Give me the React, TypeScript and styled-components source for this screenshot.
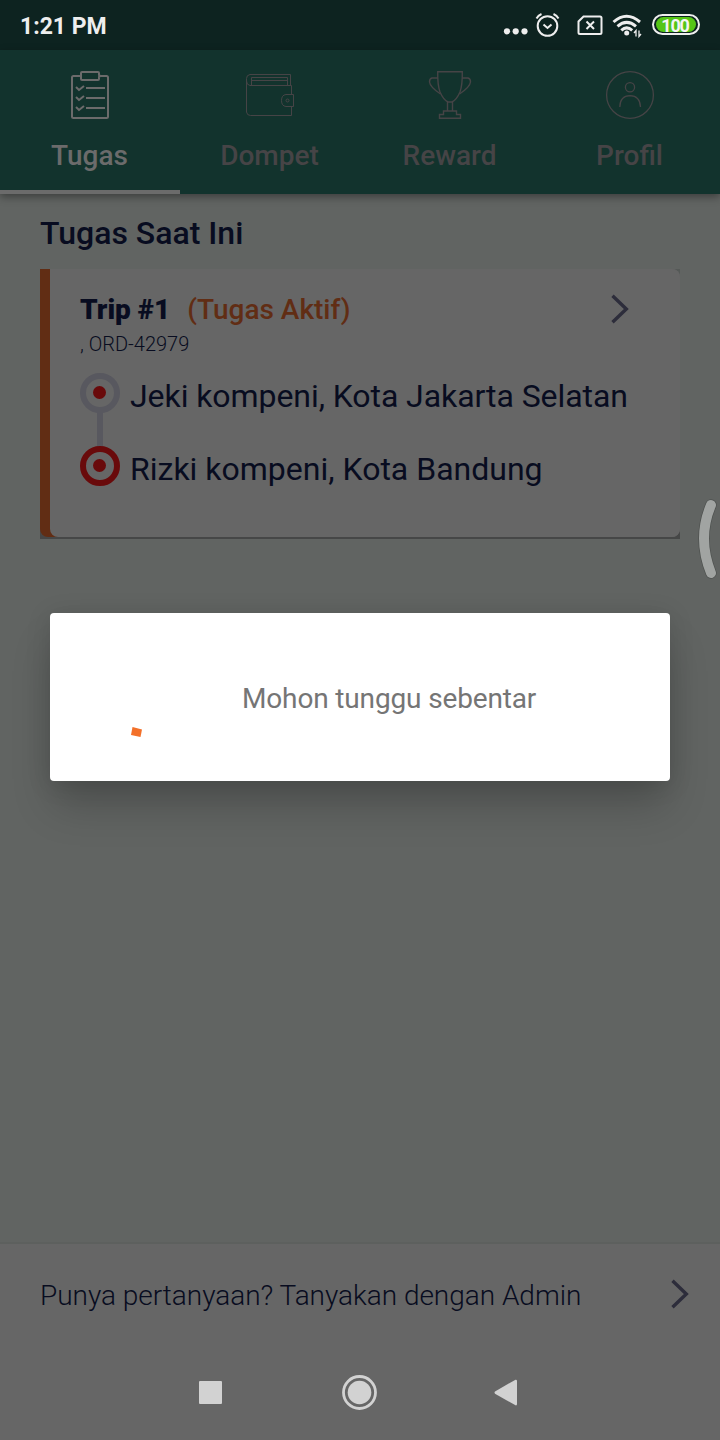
import React from "react";
import styled, { createGlobalStyle } from "styled-components";

const GlobalStyle = createGlobalStyle`
  body { margin: 0; background: #616462; }
  * { box-sizing: border-box; }
`;

const color = {
  status: "#0d2320",
  bar: "#12332d",
  page: "#616462",
  surface: "#666666",
  navy: "#080c20",
  orange: "#612d14",
  red: "#690a0b",
  muted: "#58585f",
  icon: "#eeeeee",
  nav: "#d2d2d2",
};

const Screen = styled.div`
  position: relative;
  display: flex;
  flex-direction: column;
  width: 720px;
  height: 1440px;
  overflow: hidden;
  background: ${color.page};
  font-family: Roboto, "Liberation Sans", sans-serif;
`;

const StatusBar = styled.header`
  display: flex;
  align-items: center;
  justify-content: space-between;
  height: 50px;
  padding: 0 20px 0 20px;
  background: ${color.status};
`;

const Clock = styled.span`
  color: ${color.icon};
  font-size: 23px;
  font-weight: 700;
  line-height: 28px;
  padding-top: 3px;
`;

const StatusIcons = styled.div`
  display: flex;
  align-items: center;
`;

const Battery = styled.div`
  display: flex;
  align-items: center;
  justify-content: center;
  width: 48px;
  height: 21px;
  margin: -1px 0 0 10px;
  border: 2px solid ${color.icon};
  border-radius: 11px;
  padding: 1px 2px;
`;

const BatteryLevel = styled.span`
  width: 100%;
  height: 15px;
  padding-right: 2px;
  border-radius: 8px;
  background: #55c516;
  color: #f4f4f4;
  font-size: 18px;
  font-weight: 700;
  letter-spacing: -1.2px;
  line-height: 17px;
  text-align: center;
`;

const Tabs = styled.nav`
  position: relative;
  display: grid;
  grid-template-columns: repeat(4, 1fr);
  height: 144px;
  background: ${color.bar};
  box-shadow: 0 3px 8px rgba(0, 0, 0, 0.38);
`;

const Tab = styled.div<{ $active?: boolean }>`
  display: flex;
  flex-direction: column;
  align-items: center;
  padding-top: 20px;
  color: ${(p) => (p.$active ? "#6b6b6b" : "#464446")};
  border-bottom: 4px solid ${(p) => (p.$active ? "#6b6b6b" : "transparent")};
`;

const TabLabel = styled.span`
  margin-top: 19px;
  padding-right: 1px;
  font-size: 28px;
  font-weight: 500;
  line-height: 34px;
`;

const Content = styled.main`
  flex: 1;
  padding: 20px 40px 0;
`;

const Title = styled.h1`
  margin: 0 0 17px;
  color: ${color.navy};
  font-size: 32px;
  font-weight: 500;
  line-height: 38px;
`;

const CardShadow = styled.section`
  padding-bottom: 2px;
  background: linear-gradient(#555957 0 50%, #464747 50%);
`;

const CardFrame = styled.div`
  height: 268px;
  padding-left: 10px;
  border-radius: 0 8px 8px 8px;
  background: linear-gradient(to right, ${color.orange} 20px, ${color.surface} 20px);
`;

const Card = styled.div`
  display: flex;
  justify-content: space-between;
  height: 100%;
  padding: 24px 48px 0 30px;
  border-radius: 0 8px 8px 8px;
  background: ${color.surface};
`;

const TripHeading = styled.div`
  display: flex;
  gap: 17px;
  font-size: 28px;
  line-height: 34px;
`;

const TripName = styled.span`
  color: ${color.navy};
  font-weight: 900;
`;

const TripState = styled.span`
  color: ${color.orange};
  font-weight: 500;
`;

const OrderNumber = styled.div`
  margin-top: 5px;
  color: ${color.navy};
  font-size: 20px;
  font-weight: 300;
  line-height: 24px;
`;

const Route = styled.div`
  display: flex;
  flex-direction: column;
  margin-top: 17px;
`;

const Stop = styled.div`
  display: flex;
  gap: 10px;
  height: 40px;
`;

const Marker = styled.span<{ $ring: string }>`
  flex: none;
  display: flex;
  align-items: center;
  justify-content: center;
  width: 40px;
  height: 40px;
  padding: 0 1px 1px 0;
  border: 6px solid ${(p) => p.$ring};
  border-radius: 50%;
  &::after {
    content: "";
    width: 13px;
    height: 13px;
    border-radius: 50%;
    background: ${color.red};
  }
`;

const Connector = styled.span`
  width: 6px;
  height: 35px;
  margin: -1px 0 -1px 17px;
  background: ${color.muted};
`;

const Address = styled.span<{ $tight?: boolean }>`
  padding-top: 4px;
  color: ${color.navy};
  font-size: 32px;
  letter-spacing: ${(p) => (p.$tight ? "-0.07px" : "0")};
  line-height: 38px;
  white-space: nowrap;
`;

const Chevron = styled.svg`
  width: 18px;
  height: 30px;
  margin: 1px 3px 0 0;
  flex: none;
`;

const Body = styled.div`
  width: 500px;
`;

const HelpRow = styled.footer`
  display: flex;
  align-items: center;
  justify-content: space-between;
  height: 101px;
  padding: 0 28px 0 40px;
  border-top: 2px solid #5d605e;
  background: ${color.surface};
  color: ${color.navy};
  font-size: 28px;
  font-weight: 300;
  line-height: 34px;
`;

const HelpText = styled.span`
  padding-top: 4px;
  letter-spacing: -0.03px;
`;

const SystemNav = styled.div`
  display: flex;
  justify-content: center;
  align-items: center;
  height: 97px;
  padding-top: 2px;
  background: ${color.surface};
`;

const HelpChevron = styled.div`
  display: flex;
  padding-bottom: 1px;
`;

const Dialog = styled.div`
  position: absolute;
  top: 613px;
  left: 50px;
  width: 620px;
  height: 168px;
  display: flex;
  align-items: center;
  padding-left: 80px;
  border-radius: 4px;
  background: #ffffff;
  box-shadow: 0 28px 40px -4px rgba(0, 0, 0, 0.2), 0 3px 26px rgba(0, 0, 0, 0.12);
`;

const Message = styled.span`
  margin: 3px 0 0 99px;
  color: #757575;
  font-size: 28px;
  letter-spacing: -0.15px;
  line-height: 34px;
`;

const Spinner = styled.svg`
  width: 13px;
  height: 12px;
  margin-top: 70px;
`;

const EdgeHandle = styled.svg`
  position: absolute;
  top: 496px;
  right: 0;
  width: 26px;
  height: 86px;
`;

const Arrow = () => (
  <Chevron viewBox="0 0 18 30" fill="none" stroke="#2d2d3b" strokeWidth="3.4">
    <path d="M1.5 1.8 15.3 15 1.5 28.2" />
  </Chevron>
);

const TaskIcon = () => (
  <svg width="50" height="50" viewBox="0 0 50 50" fill="none" stroke="currentColor" strokeWidth="2">
    <path d="M15 6H8.500Q7 6 7 7.500V46.500Q7 48 8.500 48H41.500Q43 48 43 46.500V7.500Q43 6 41.500 6H35" />
    <path d="M17 2H33Q34 2 34 3V5Q36 6 34 7V9Q34 10 33 10H17Q16 10 16 9V3Q16 2 17 2Z" />
    <path d="M21 18H40M21 28H40M21 38H40M11 17l3 3 5-4M11 27l3 3 5-4M11 37l3 3 5-4" />
  </svg>
);

const WalletIcon = () => (
  <svg width="50" height="50" viewBox="0 0 50 50" fill="none" stroke="currentColor" strokeWidth="1">
    <path d="M45.500 15.500V4.500H5Q1.500 5 1.500 8.500V42Q2 45.500 5.500 45.500H46.500V36.500M46.500 24.500V15.500H5Q1.500 15 1.500 11" />
    <path d="M6.500 15V7.500H42.500V15M6.500 10.500H42" />
    <path d="M48.500 24.500H41Q36.500 25 36.500 30.500T41 36.500H48.500Z" />
    <circle cx="42.500" cy="30.500" r="1.500" />
  </svg>
);

const TrophyIcon = () => (
  <svg width="50" height="50" viewBox="0 0 50 50" fill="none" stroke="currentColor" strokeWidth="1.400">
    <path d="M12.700 1.700H37.300Q37.500 15 35 22Q31.500 30 27 32H23Q18.500 30 15 22Q12.500 15 12.700 1.700Z" />
    <path d="M13 8H7Q4.500 8.500 4.500 12Q5 17 15.500 24M37 8H43Q45.500 8.500 45.500 12Q45 17 34.500 24M22.500 32V41M27.500 32V41M19.500 41H31.500V44.500H35.500V48.300H14.500V44.500H18.500V41Z" />
  </svg>
);

const ProfileIcon = () => (
  <svg width="50" height="50" viewBox="0 0 50 50" fill="none" stroke="currentColor" strokeWidth="1.300">
    <circle cx="25" cy="25" r="23.400" />
    <circle cx="25" cy="17.300" r="4.600" />
    <path d="M14.800 37Q15 26 25 25.700Q35 26 35.500 37" />
  </svg>
);

const SystemIcons = () => (
  <svg width="140" height="50" viewBox="502 0 140 50" fill="none" stroke={color.icon} strokeWidth="2">
    <g fill={color.icon} stroke="none">
      <circle cx="507" cy="31.300" r="3.100" />
      <circle cx="515.700" cy="31.300" r="3.100" />
      <circle cx="524.500" cy="31.300" r="3.100" />
      <circle cx="626.700" cy="33" r="2.500" />
    </g>
    <circle cx="547.500" cy="26" r="9.800" />
    <path d="m543.500 24.500 4 3.500 4-3.500M536.500 18.500q1.500-3 5-4.500M558.500 18.500q-1.500-3-5-4.500" />
    <path d="M583.500 16.500H600Q601.500 16.500 601.500 18V32.500Q601.500 34 600 34H580Q578.500 34 578.500 32.500V21.500Z" />
    <path d="m586.500 21.500 7.500 7.500m0-7.500-7.500 7.500" />
    <path strokeWidth="3" d="M613.500 22Q626.500 10.500 640 22M617.500 26.300Q626.700 18.500 636 26.300M621.300 30.300Q626.700 25.500 632.200 30.300" />
    <path strokeWidth="1.300" d="M636 36.500V30.500L634 33M639 30.500V36.500L641 34" />
  </svg>
);

const NavIcons = () => (
  <svg width="340" height="50" viewBox="190 1368 340 50" fill={color.nav}>
    <rect x="199" y="1381" width="23" height="23" rx="1" />
    <circle cx="359.500" cy="1392.500" r="11.800" />
    <circle cx="359.500" cy="1392.500" r="16" fill="none" stroke={color.nav} strokeWidth="2.800" />
    <path d="M495 1391.500 515.500 1379.700Q517 1379.500 517 1381V1404Q517 1405.700 515.500 1405.300L495 1393.700Q494 1392.600 495 1391.500Z" />
  </svg>
);

const tabs = [
  { label: "Tugas", Icon: TaskIcon },
  { label: "Dompet", Icon: WalletIcon },
  { label: "Reward", Icon: TrophyIcon },
  { label: "Profil", Icon: ProfileIcon },
];

export default function App() {
  return (
    <Screen>
      <GlobalStyle />
      <StatusBar>
        <Clock>1:21 PM</Clock>
        <StatusIcons>
          <SystemIcons />
          <Battery>
            <BatteryLevel>100</BatteryLevel>
          </Battery>
        </StatusIcons>
      </StatusBar>
      <Tabs>
        {tabs.map(({ label, Icon }, i) => (
          <Tab key={label} $active={i === 0}>
            <Icon />
            <TabLabel>{label}</TabLabel>
          </Tab>
        ))}
      </Tabs>
      <Content>
        <Title>Tugas Saat Ini</Title>
        <CardShadow>
          <CardFrame>
            <Card>
              <Body>
                <TripHeading>
                  <TripName>Trip #1</TripName>
                  <TripState>(Tugas Aktif)</TripState>
                </TripHeading>
                <OrderNumber>, ORD-42979</OrderNumber>
                <Route>
                  <Stop>
                    <Marker $ring={color.muted} />
                    <Address $tight>Jeki kompeni, Kota Jakarta Selatan</Address>
                  </Stop>
                  <Connector />
                  <Stop>
                    <Marker $ring={color.red} />
                    <Address>Rizki kompeni, Kota Bandung</Address>
                  </Stop>
                </Route>
              </Body>
              <Arrow />
            </Card>
          </CardFrame>
        </CardShadow>
      </Content>
      <HelpRow>
        <HelpText>Punya pertanyaan? Tanyakan dengan Admin</HelpText>
        <HelpChevron>
          <Arrow />
        </HelpChevron>
      </HelpRow>
      <SystemNav>
        <NavIcons />
      </SystemNav>
      <EdgeHandle viewBox="694 496 26 86" fill="none" strokeLinecap="round">
        <path d="M711 505Q697 538 711 573" stroke="#4e514f" strokeWidth="11.4" />
        <path d="M711 505Q697 538 711 573" stroke="#a1a4a2" strokeWidth="10" />
      </EdgeHandle>
      <Dialog>
        <Spinner viewBox="0 0 13 12">
          <path d="M2.500 1 12 3.500 10.500 11 1 9Z" fill="#f37029" />
        </Spinner>
        <Message>Mohon tunggu sebentar</Message>
      </Dialog>
    </Screen>
  );
}
